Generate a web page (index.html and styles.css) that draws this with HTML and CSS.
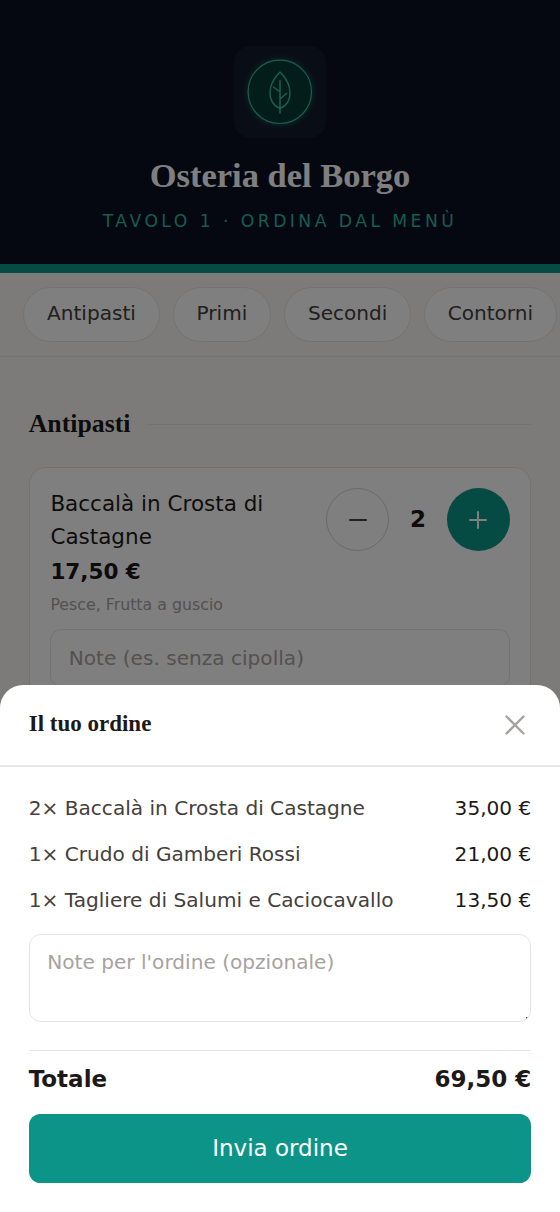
FILE: index.html
```html
<!DOCTYPE html>
<html lang="it">
<head>
<meta charset="utf-8">
<title>Osteria del Borgo</title>
<link rel="stylesheet" href="styles.css">
</head>
<body>
<div class="page">
  <header class="hero">
    <div class="logo">
      <svg viewBox="0 0 92 92" fill="none" stroke="#38bd98" stroke-linecap="round" stroke-linejoin="round">
        <circle class="logo-ring" cx="45.800" cy="45.800" r="31.700" fill="#043a35" stroke-width="1.200"/>
        <path d="M46 26C39 33 36 40 36 47C36 56 40 60 46 62.500C52 60 56 56 56 47C56 40 53 33 46 26Z" stroke-width="1.500"/>
        <path d="M46 34.500V67M46 46L39.500 41M46 53L52.700 47.200" stroke-width="1.500"/>
      </svg>
    </div>
    <h1 class="name">Osteria del Borgo</h1>
    <p class="tagline">Tavolo 1 · Ordina dal menù</p>
  </header>
  <nav class="tabs">
    <a class="tab">Antipasti</a>
    <a class="tab">Primi</a>
    <a class="tab">Secondi</a>
    <a class="tab">Contorni</a>
  </nav>
  <main class="menu">
    <div class="section-head"><h2 class="section-title">Antipasti</h2><span class="rule"></span></div>
    <article class="card">
      <div class="dish">
        <div class="dish-info">
          <div class="dish-name">Baccalà in Crosta di Castagne</div>
          <div class="dish-price">17,50 €</div>
          <div class="allergens">Pesce, Frutta a guscio</div>
        </div>
        <div class="stepper">
          <button class="step" aria-label="Meno"><svg viewBox="0 0 24 24"><path d="M4 12H20"/></svg></button>
          <span class="qty">2</span>
          <button class="step step-add" aria-label="Più"><svg viewBox="0 0 24 24"><path d="M4 12H20M12 4V20"/></svg></button>
        </div>
      </div>
      <input class="field note" placeholder="Note (es. senza cipolla)">
    </article>
  </main>
</div>
<div class="overlay">
  <section class="sheet">
    <div class="sheet-head">
      <h2 class="sheet-title">Il tuo ordine</h2>
      <svg class="close" viewBox="0 0 20 20"><path d="M1.500 1.500L18.500 18.500M18.500 1.500L1.500 18.500"/></svg>
    </div>
    <div class="sheet-body">
      <div class="line"><span>2× Baccalà in Crosta di Castagne</span><span class="amount">35,00 €</span></div>
      <div class="line"><span>1× Crudo di Gamberi Rossi</span><span class="amount">21,00 €</span></div>
      <div class="line"><span>1× Tagliere di Salumi e Caciocavallo</span><span class="amount">13,50 €</span></div>
      <textarea class="field order-note" placeholder="Note per l'ordine (opzionale)"></textarea>
    </div>
    <div class="sheet-foot">
      <div class="total"><span>Totale</span><span>69,50 €</span></div>
      <button class="send">Invia ordine</button>
    </div>
  </section>
</div>
</body>
</html>
```
FILE: styles.css
```css
* { box-sizing: border-box; margin: 0; }
body { background: #faf7f2; color: #1c1917; font: 20.1px/28.7px "DejaVu Sans", sans-serif; overflow: hidden; }
button, input, textarea { font: inherit; }
.page { height: 1212px; overflow: hidden; }

.hero { height: 273px; padding-top: 46px; background: #0a0e22; border-bottom: 9px solid #0d9488; text-align: center; }
.logo { width: 92px; height: 92px; margin: 0 auto; border-radius: 17px; background: #131b2b; }
.logo svg { display: block; }
.logo-ring { filter: drop-shadow(0 0 3px #0d948899); }
.name { margin-top: 16px; font: bold 34.5px/43px "Liberation Serif", serif; color: #fff; }
.tagline { margin-top: 10px; font-size: 17.2px; line-height: 29px; letter-spacing: 3.45px; text-transform: uppercase; color: #2eb8a0; }

.tabs { display: flex; gap: 12.6px; height: 84px; padding: 14px 23px; border-bottom: 1px solid #e7e5e4; overflow: hidden; }
.tab { flex: none; height: 54.5px; padding: 0 23px; border: 1px solid #e7e5e4; border-radius: 28px; background: #fff; color: #44403c; line-height: 51px; }
.tab:last-child { margin-left: -.4px; padding-right: 22.5px; }

.menu { padding: 46px 28.7px 0; }
.section-head { display: flex; align-items: center; gap: 17px; height: 42px; }
.section-title { font: bold 25.8px/36px "Liberation Serif", serif; }
.rule { flex: 1; height: 1px; background: #e7e5e4; }
.card { margin-top: 22.4px; height: 260px; padding: 20px 20px 20px 20.7px; border: 1.4px solid #e7e5e4; border-radius: 17px; background: #fff; }
.dish { display: flex; justify-content: space-between; }
.dish-info { width: 240px; margin-top: -1px; }
.dish-name { font-size: 21.5px; line-height: 33px; }
.dish-price { margin-top: 2px; font-size: 21.5px; font-weight: bold; line-height: 34px; }
.allergens { margin-top: 4px; font-size: 15.8px; line-height: 24px; color: #a8a29e; }
.stepper { display: flex; height: 63px; margin-right: .5px; }
.step { display: grid; place-items: center; width: 63px; height: 63px; padding: 0; border: 1.4px solid #d6d3d1; border-radius: 50%; background: #fff; color: #44403c; }
.step svg { width: 24px; stroke: currentColor; stroke-width: 2; stroke-linecap: round; }
.step-add { border: 0; background: #0d9488; color: #fff; }
.qty { width: 57.4px; font-size: 23px; font-weight: bold; line-height: 62px; text-align: center; }
.field { display: block; width: 100%; border: 1.4px solid #e7e5e4; border-radius: 11.5px; background: #fff; outline: 0; }
.field::placeholder { color: #a8a29e; opacity: 1; }
.note { height: 58px; margin-top: 12px; padding: 0 17.4px; }

.overlay { position: fixed; inset: 0; display: flex; align-items: flex-end; background: rgba(0, 0, 0, .5); }
.sheet { width: 100%; height: 527px; border-radius: 23px 23px 0 0; background: #fff; }
.sheet-head { display: flex; justify-content: space-between; align-items: center; height: 82px; padding: 0 34.7px 0 28.7px; border-bottom: 2px solid #e9e8e7; }
.sheet-title { font: bold 23px/32px "Liberation Serif", serif; padding-bottom: 2px; }
.close { width: 20px; height: 20px; overflow: visible; stroke: #a8a29e; stroke-width: 2.4; stroke-linecap: round; }
.sheet-body { padding: 18px 28.7px 0; }
.line { display: flex; justify-content: space-between; height: 46px; line-height: 46px; color: #44403c; }
.amount { color: #1c1917; }
.order-note { height: 88px; margin-top: 11px; padding: 13px 17.6px; resize: none; background: radial-gradient(circle at calc(100% - 3px) calc(100% - 3px), #444 .9px, transparent 1.4px) #fff; }
.sheet-foot { margin: 27.5px 28.7px 0; border-top: 1px solid #e7e5e4; }
.total { display: flex; justify-content: space-between; height: 63.5px; line-height: 56px; font-size: 23px; font-weight: bold; }
.send { display: block; width: 100%; height: 69px; padding: 0; border: 0; border-radius: 11.5px; background: #0d9488; color: #fff; font-size: 23px; }
```
